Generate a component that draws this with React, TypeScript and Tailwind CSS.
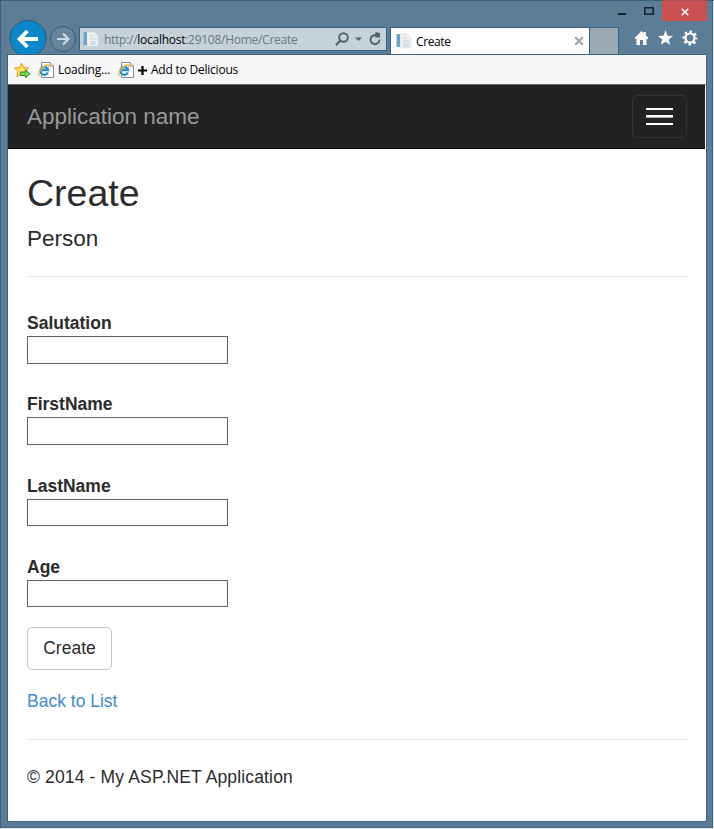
import React from "react";

function PageIcon() {
  return (
    <svg width="16" height="16" viewBox="0 0 16 16" className="shrink-0">
      <path d="M4 1h7l4 3.500V15H4z" fill="#eef2f4" stroke="#d3dade" strokeWidth=".6" />
      <path d="M0.500 1h3.500v13H0.500z" fill="#6ea3cb" />
      <path d="M7 5h4M6.500 8h7M7 11h6M7 13h6" stroke="#c3cbd1" strokeWidth="1" />
    </svg>
  );
}

function ExplorerIcon() {
  return (
    <svg width="17" height="17" viewBox="0 0 17 17" className="shrink-0">
      <path d="M3.500.5h8.500l3.500 3.500v11.500h-12z" fill="#fff" stroke="#8c8c8c" />
      <path d="M12 .5V4h3.500" fill="#ddd" stroke="#8c8c8c" />
      <path d="M9.900 10.600A3.900 3.900 0 1 1 10.200 8.200H3" fill="none" stroke="#2b8fd8" strokeWidth="2.300" />
      <path d="M1.300 13.600C-1 12 4.500 3.600 9.600 3c1.400-.1 1.500 1 .9 2.200" fill="none" stroke="#e8b92c" strokeWidth="1.300" />
    </svg>
  );
}

function WindowControls() {
  return (
    <div className="flex h-[21px] justify-end pr-[7px]">
      <svg width="48" height="21" viewBox="0 0 48 21">
        <path d="M4 14h8" stroke="#15202a" strokeWidth="2" />
        <path d="M30.750 7.750h8.500v6.500h-8.500z" fill="none" stroke="#15202a" strokeWidth="1.500" />
      </svg>
      <div className="flex h-[21px] w-[45px] items-center justify-center border-t border-[#a5525c] bg-[#c94f52]">
        <svg width="8" height="8" viewBox="0 0 8 8" className="mt-[2px]">
          <path d="M.7.7l6.600 6.600M7.300.7L.7 7.300" stroke="#fff" strokeWidth="1.500" />
        </svg>
      </div>
    </div>
  );
}

function AddressRow() {
  return (
    <div className="flex h-[33px] items-start overflow-visible pl-[9px]">
      <svg width="38" height="34" viewBox="0 0 38 34" className="-mt-[1px] shrink-0">
        <circle cx="19" cy="18.500" r="18" fill="#0c87c9" stroke="#2c5877" />
        <path d="M10 19h19M18.500 11l-8 8 8 8" fill="none" stroke="#fff" strokeWidth="3.800" />
      </svg>
      <svg width="28" height="28" viewBox="0 0 28 28" className="ml-[2px] mt-[4px] shrink-0">
        <circle cx="14" cy="14" r="12.500" fill="#66849a" stroke="#3c5d78" />
        <path d="M8 14h11M14 8.500l5.500 5.500-5.500 5.500" fill="none" stroke="#cbd8e0" strokeWidth="2.200" />
      </svg>
      <div className="ml-[2px] mt-[6px] flex h-[24px] w-[308px] shrink-0 items-center border border-[#3b5f7c] bg-[#c5d2d8] pl-[3px]">
        <PageIcon />
        <div className="ml-[5px] mt-[2px] w-[230px] whitespace-nowrap font-['Open_Sans','Noto_Sans',sans-serif] text-[12px] leading-[22px] tracking-[-0.27px] text-[#6d777d]">
          http://<span className="text-black">localhost</span>:29108/Home/Create
        </div>
        <svg width="48" height="16" viewBox="0 0 48 16" className="shrink-0">
          <circle cx="9.500" cy="6.500" r="4.300" fill="none" stroke="#53626c" strokeWidth="2" />
          <path d="M6.500 9.500L2 14" stroke="#53626c" strokeWidth="2.400" />
          <path d="M21 6.500h7l-3.500 3.500z" fill="#53626c" />
          <path d="M43 4.600A4.500 4.500 0 1 0 45.500 8.700" fill="none" stroke="#53626c" strokeWidth="2" />
          <path d="M41.500 1l4.500 1v4.500h-5z" fill="#53626c" />
        </svg>
      </div>
      <div className="ml-[3px] mt-[6px] flex h-[27px] w-[200px] shrink-0 items-center border border-b-0 border-[#3b5f7c] bg-white pl-[5px] pr-[5px]">
        <PageIcon />
        <span className="ml-[4px] mt-[2px] grow font-['Open_Sans','Noto_Sans',sans-serif] text-[12px] tracking-[-0.4px] text-black">Create</span>
        <svg width="10" height="10" viewBox="0 0 10 10">
          <path d="M1.200 1.200l7.600 7.600M8.800 1.200L1.200 8.800" stroke="#a2a2a2" strokeWidth="2" />
        </svg>
      </div>
      <div className="mt-[6px] h-[27px] w-[29px] shrink-0 border border-b-0 border-l-0 border-[#3b5f7c] bg-[#9babb6]" />
      <svg width="66" height="18" viewBox="0 0 66 18" className="ml-[14px] mt-[8px] shrink-0">
        <path d="M8.500 2l2 1.900V3h2.300v3.100L15.500 9l-1.100 1.300-.9-.8V16H10v-5H7v5H3.500V9.500l-.9.800L1.500 9z" fill="#fff" />
        <path d="M32.500 1.300l2 5.400 5.600.2-4.400 3.500 1.500 5.400-4.700-3.100-4.700 3.100 1.500-5.400-4.400-3.500 5.600-.2z" fill="#fff" />
        <circle cx="57" cy="9" r="4.500" fill="none" stroke="#fff" strokeWidth="2.200" />
        <circle cx="57" cy="9" r="6.300" fill="none" stroke="#fff" strokeWidth="2.400" strokeDasharray="2.470 2.478" strokeDashoffset="1.235" />
      </svg>
    </div>
  );
}

function FavoritesBar() {
  return (
    <div className="flex h-[30px] items-center border-b border-[#686868] bg-[#f7f7f7] pl-[6px] font-['Open_Sans','Noto_Sans',sans-serif] text-[12px] text-black">
      <svg width="17" height="17" viewBox="0 0 17 17" className="mt-[2px] shrink-0">
        <path d="M7.500 1.200l2 4.300 5 .6-3.600 3.400 1 5-4.400-2.400-4.500 2.400 1-5L.6 6.100l4.900-.6z" fill="#ffe15a" stroke="#df9220" strokeLinejoin="round" />
        <path d="M6.500 10h5V7.800l4.500 4-4.500 4v-2.300h-5z" fill="#77d450" stroke="#31912d" />
      </svg>
      <span className="ml-[7px] mt-[2px] flex items-center"><ExplorerIcon /></span>
      <span className="ml-[3px] mt-px w-[60px] tracking-[-0.2px]">Loading...</span>
      <span className="mt-[2px]"><ExplorerIcon /></span>
      <svg width="9" height="9" viewBox="0 0 9 9" className="ml-[3px] mt-[2px]">
        <path d="M0 4.500h9M4.500 0v9" stroke="#000" strokeWidth="2.200" />
      </svg>
      <span className="ml-[4px] mt-px whitespace-nowrap tracking-[-0.22px]">Add to Delicious</span>
    </div>
  );
}

function Field({ label }: { label: string }) {
  return (
    <label className="block h-[81.330px]">
      <span className="block h-[25px] text-[17.500px] font-bold leading-[25px]">{label}</span>
      <input className="block h-[27.500px] w-[201px] border border-[#626262] bg-white px-1 outline-none" />
    </label>
  );
}

export default function App() {
  return (
    <div className="h-[829px] w-[714px] overflow-hidden bg-[#e7ecef]">
      <div className="h-[828px] w-[713px] border border-[#3f607b] bg-[#5b7d96]">
        <div className="-ml-px -mt-px w-[714px]">
          <div className="h-[54px] border-t border-[#3f607b]">
            <div className="-mt-px">
              <WindowControls />
              <AddressRow />
            </div>
          </div>
          <div className="ml-[7px] h-[768px] w-[700px] border border-[#3d6280] bg-white">
            <FavoritesBar />
            <div className="font-['Liberation_Sans',Arial,sans-serif] text-[17.500px] leading-[25px] text-[#2b2b2b]">
              <header className="flex h-[64px] w-[697px] items-center justify-between border-b border-[#080808] bg-[#222] pl-[19px] pr-[18px]">
                <span className="text-[22.500px] text-[#999]">Application name</span>
                <button aria-label="Menu" className="flex h-[43px] w-[55px] flex-col items-center justify-center gap-[5px] rounded-[5px] border border-[#333]">
                  <span className="h-[2px] w-[27px] bg-white" />
                  <span className="h-[3px] w-[27px] border-b border-[#aaa] bg-white" />
                  <span className="h-[2px] w-[27px] bg-white" />
                </button>
              </header>
              <main className="ml-[19px] w-[661px] pt-[24px]">
                <h2 className="h-[41px] text-[37.500px] leading-[41px]">Create</h2>
                <h4 className="mt-[12px] h-[25px] text-[22.500px] leading-[25px]">Person</h4>
                <hr className="mt-[25px] border-[#e8e8e8]" />
                <form className="pt-[34px]">
                  <Field label="Salutation" />
                  <Field label="FirstName" />
                  <Field label="LastName" />
                  <Field label="Age" />
                  <button type="button" className="-mt-[9px] block h-[43px] w-[85px] rounded-[5px] border border-[#c4c4c4] bg-white">Create</button>
                </form>
                <a className="mt-[19px] block text-[#428bca]">Back to List</a>
                <hr className="mt-[25px] border-[#e8e8e8]" />
                <footer className="pt-[25px] tracking-[0.15px]">© 2014 - My ASP.NET Application</footer>
              </main>
            </div>
          </div>
        </div>
      </div>
    </div>
  );
}
